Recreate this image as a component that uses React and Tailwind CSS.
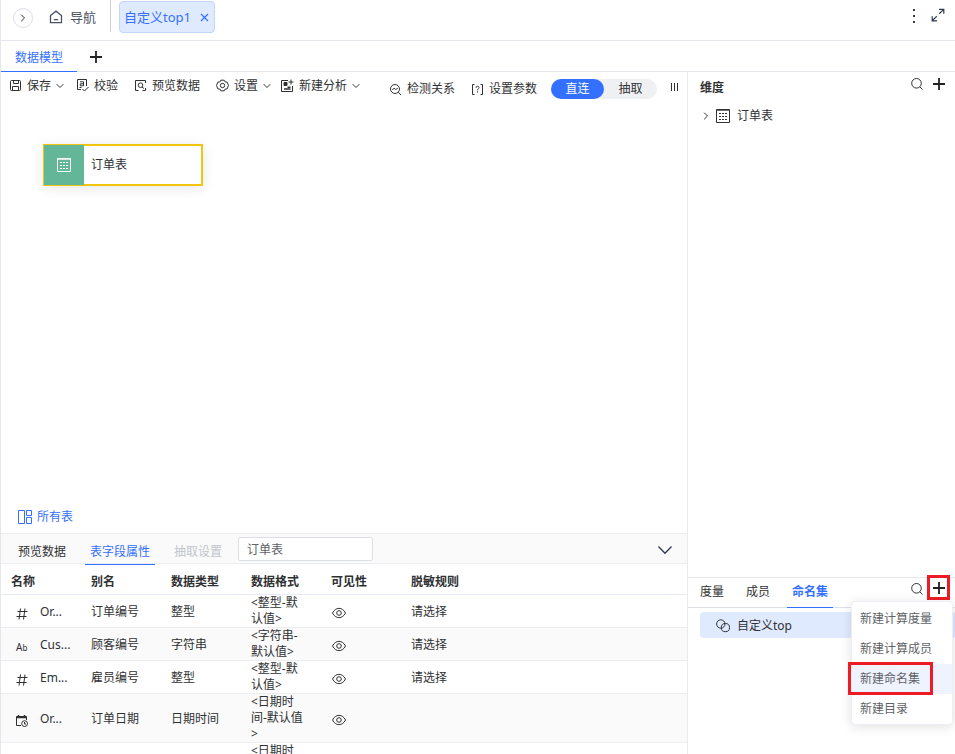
import { useState } from 'react'
import clsx from 'clsx'

const FIELDS = [
  { id: 1, icon: 'number', name: 'Or...', alias: '订单编号', type: '整型', format: '<整型-默认值>', visible: true, rule: '请选择' },
  { id: 2, icon: 'text', name: 'Cus...', alias: '顾客编号', type: '字符串', format: '<字符串-默认值>', visible: true, rule: '请选择' },
  { id: 3, icon: 'number', name: 'Em...', alias: '雇员编号', type: '整型', format: '<整型-默认值>', visible: true, rule: '请选择' },
  { id: 4, icon: 'date', name: 'Or...', alias: '订单日期', type: '日期时间', format: '<日期时间-默认值>', visible: true },
  { id: 5, format: '<日期时间-默认值>' },
]

const COLUMNS = ['名称', '别名', '数据类型', '数据格式', '可见性', '脱敏规则']

const MENU_ITEMS = ['新建计算度量', '新建计算成员', '新建命名集', '新建目录']

export default function App() {
  return (
    <div className="flex h-screen flex-col overflow-hidden border-l border-[#e4e7ed] bg-white font-['Noto_Sans','Noto_Sans_CJK_SC',sans-serif] text-xs leading-4 text-[#303133]">
      <TopBar />
      <ModelTabs />
      <div className="flex min-h-0 flex-1">
        <main className="flex min-w-0 flex-1 flex-col">
          <Toolbar />
          <Canvas />
          <FieldPanel />
        </main>
        <SidePanel />
      </div>
    </div>
  )
}

function TopBar() {
  return (
    <header className="flex h-[41px] shrink-0 items-start border-b border-[#e4e7ed]">
      <button aria-label="展开" className="mt-2 ml-3 flex size-5 items-center justify-center rounded-full border border-[#dcdfe6]">
        <Chevron className="size-2 -rotate-90" />
      </button>
      <a href="#nav" className="ml-4 flex h-[34px] items-center gap-[7px] text-[13px] text-[#4a5264]">
        <HomeIcon />
        导航
      </a>
      <span className="ml-[14px] h-8 w-px bg-[#ccd1dc]" />
      <div className="mt-px ml-2 flex h-8 items-center gap-[9px] rounded border border-[#c3d5fd] bg-[#e0eaff] px-1 text-[13px] text-[#3370ff]">
        <a href="#top1">自定义top1</a>
        <button aria-label="关闭" className="mr-px">
          <svg className="size-[9px]" viewBox="0 0 9 9" stroke="currentColor" strokeWidth="1.2">
            <path d="M1 1l7 7M8 1l-7 7" />
          </svg>
        </button>
      </div>
      <div className="mt-2 mr-2.5 ml-auto flex items-center gap-3 text-[#303b50]">
        <button aria-label="更多">
          <svg className="h-[15px] w-[10px]" viewBox="0 0 10 15" fill="currentColor">
            <path d="M4 0h2v2H4zM4 6h2v2H4zM4 12h2v2H4z" />
          </svg>
        </button>
        <button aria-label="全屏" className="pb-0.5">
          <svg className="size-[14px]" viewBox="0 0 14 14" fill="none" stroke="currentColor" strokeWidth="1.2">
            <path d="M8 1.4h4.8v4.4M12.5 1.6L8.2 5.8M1.2 8.2v4.6H6M1.5 12.5l4.3-4.3" />
          </svg>
        </button>
      </div>
    </header>
  )
}

function ModelTabs() {
  return (
    <nav className="flex h-[31px] shrink-0 items-center border-b border-[#e4e7ed]">
      <button className="-mb-px flex h-[31px] items-center border-b border-[#3370ff] px-[14px] pt-[3px] text-[#3370ff]">数据模型</button>
      <button aria-label="新增" className="ml-[13px] pt-px">
        <PlusIcon />
      </button>
    </nav>
  )
}

function Toolbar() {
  const [mode, setMode] = useState('直连')

  return (
    <div className="flex h-8 shrink-0 items-start whitespace-nowrap">
      <div className="flex h-[27px] items-center pl-2">
        <ToolButton icon={<SaveIcon />} label="保存" menu />
        <ToolButton icon={<CheckIcon />} label="校验" className="ml-3" />
        <ToolButton icon={<PreviewIcon />} label="预览数据" className="ml-4" />
        <ToolButton icon={<SettingIcon />} label="设置" menu className="ml-4" />
        <ToolButton icon={<AnalysisIcon />} label="新建分析" menu className="ml-[10px]" />
      </div>
      <div className="flex h-[34px] items-center pl-[29px]">
        <ToolButton icon={<RelationIcon />} label="检测关系" />
        <ToolButton icon={<ParamIcon />} label="设置参数" className="ml-4" />
        <div className="ml-[14px] flex h-5 rounded-full bg-[#eff0f2]">
          {['直连', '抽取'].map((item) => (
            <button
              key={item}
              onClick={() => setMode(item)}
              className={clsx('h-5 w-[53px] rounded-full', mode === item && 'bg-[#3370ff] text-white')}
            >
              {item}
            </button>
          ))}
        </div>
      </div>
      <button aria-label="列" className="mt-[11px] mr-2 ml-auto">
        <svg className="h-[9px] w-[9px]" viewBox="0 0 9 9" stroke="currentColor">
          <path d="M1.5 0v8M4.5 0v8M7.5 0v8" />
        </svg>
      </button>
    </div>
  )
}

function ToolButton({ icon, label, menu, className }) {
  return (
    <button className={clsx('flex items-center gap-[5px]', className)}>
      {icon}
      {label}
      {menu && <Chevron className="size-2" />}
    </button>
  )
}

function Canvas() {
  return (
    <section className="relative flex min-h-0 flex-1 flex-col">
      <div className="absolute top-10 left-[42px] flex h-[42px] w-40 items-stretch border-2 border-[#f2c511] bg-white shadow-[0_2px_12px_rgba(0,0,0,0.1)]">
        <span className="-my-px -ml-px flex w-10 items-center justify-center bg-[#63b798] text-white">
          <TableIcon className="size-[14px]" />
        </span>
        <span className="flex items-center pl-[7px]">订单表</span>
      </div>
      <button className="mt-auto mb-2 ml-4 flex items-center gap-[5px] self-start text-[#3370ff]">
        <svg className="size-[15px]" viewBox="0 0 15 15" fill="none" stroke="currentColor">
          <path d="M1.5.5h6v13h-6zM9.5.5h5v5h-5zM9.5 7.5h5v6h-5z" />
        </svg>
        所有表
      </button>
    </section>
  )
}

function FieldPanel() {
  const [table, setTable] = useState('订单表')

  return (
    <section className="h-[221px] shrink-0 overflow-hidden border-t border-[#ebedf1]">
      <div className="flex h-[30px] items-center gap-[14px] border-b border-[#ebedf1] bg-[#fafafa] pl-3">
        <button className="h-[31px] px-[5px] pt-[6px]">预览数据</button>
        <button className="-mb-px h-[31px] border-b border-[#3370ff] px-[5px] pt-[6px] text-[#3370ff]">表字段属性</button>
        <button disabled className="h-[31px] px-[5px] pt-[6px] text-[#c0c4cc]">抽取设置</button>
        <input
          aria-label="表名"
          value={table}
          onChange={(e) => setTable(e.target.value)}
          className="-ml-[3px] h-6 w-[135px] rounded-xs border border-[#dcdfe6] bg-white px-2 text-[#606266] outline-none"
        />
        <button aria-label="收起" className="mt-0.5 mr-[14px] ml-auto">
          <svg className="h-[10px] w-4" viewBox="0 0 16 10" fill="none" stroke="#2f3b52" strokeWidth="1.3">
            <path d="M1.5 1.5L8 8.3l6.5-6.8" />
          </svg>
        </button>
      </div>
      <table className="w-full table-fixed border-separate border-spacing-0 text-left">
        <thead>
          <tr>
            {COLUMNS.map((column) => (
              <th key={column} className="h-[31px] w-20 border-b border-[#e6eaf5] pt-[6px] pl-[10px] font-bold last:w-auto">{column}</th>
            ))}
          </tr>
        </thead>
        <tbody>
          {FIELDS.map((field) => (
            <tr key={field.id} className="even:bg-[#fafafa] *:border-b *:border-[#ebedf1]">
              <td className="pt-0.5 pl-[15px]">
                <span className="flex items-center gap-3">
                  <FieldIcon type={field.icon} />
                  {field.name}
                </span>
              </td>
              <td className="pt-0.5 pl-[10px]">{field.alias}</td>
              <td className="pt-0.5 pl-[10px]">{field.type}</td>
              <td className="pr-[14px] pl-[10px] break-words">{field.format}</td>
              <td className="pt-1 pl-[10px]">
                {field.visible && (
                  <button aria-label="可见性" className="block">
                    <EyeIcon />
                  </button>
                )}
              </td>
              <td className="pt-0.5 pl-[10px]">{field.rule}</td>
            </tr>
          ))}
        </tbody>
      </table>
    </section>
  )
}

function SidePanel() {
  return (
    <aside className="flex w-[268px] shrink-0 flex-col border-l border-[#e9ebef]">
      <section className="min-h-0 flex-1">
        <div className="flex h-[30px] items-center pl-3">
          <h2 className="pt-0.5 font-bold">维度</h2>
          <button aria-label="搜索" className="mr-[10px] mb-[6px] ml-auto">
            <SearchIcon />
          </button>
          <button aria-label="新增" className="mr-[10px] mb-[6px]">
            <PlusIcon />
          </button>
        </div>
        <button className="flex h-7 items-center pl-[14px]">
          <Chevron className="mr-1 size-2 -rotate-90" />
          <TableIcon className="mr-[7px] ml-0.5 size-[14px]" />
          订单表
        </button>
      </section>
      <section className="h-[177px] shrink-0 border-t border-[#e4e7ed]">
        <div className="flex h-[30px] items-center border-b border-[#dfe1e6] pl-[7px]">
          <button className="px-[5px] pb-0.5">度量</button>
          <button className="ml-3 px-[5px] pb-0.5">成员</button>
          <button className="-mb-px ml-3 h-[30px] border-b border-[#3370ff] px-[5px] pb-0.5 font-bold text-[#3370ff]">命名集</button>
          <button aria-label="搜索" className="mr-1 mb-[7px] ml-auto">
            <SearchIcon />
          </button>
          <div className="relative mr-[5px] mb-[11px]">
            <button aria-label="新增" className="flex h-[25px] w-[23px] items-center justify-center border-[3px] border-[#ed1c24] pt-px">
              <PlusIcon />
            </button>
            <CreateMenu />
          </div>
        </div>
        <button className="mt-1 ml-3 flex h-[26px] w-64 items-center gap-[7px] rounded bg-[#e0eaff] pt-px pl-4">
          <SetIcon />
          自定义top
        </button>
      </section>
    </aside>
  )
}

function CreateMenu() {
  return (
    <ul className="absolute top-[26px] -right-[3px] z-10 w-[102px] rounded border border-[#ebeef5] bg-white pt-[2px] text-[#606266] shadow-[0_2px_12px_rgba(0,0,0,0.12)]">
      {MENU_ITEMS.map((item) => (
        <li key={item} className={clsx('relative h-[30px]', item === '新建命名集' && 'bg-[#eef3ff]')}>
          <button className="h-full w-full pl-2 text-left">{item}</button>
          {item === '新建命名集' && (
            <span className="pointer-events-none absolute -top-[2px] -left-1 h-[33px] w-[85px] border-[3px] border-[#ed1c24]" />
          )}
        </li>
      ))}
    </ul>
  )
}

function Chevron({ className }) {
  return (
    <svg className={className} viewBox="0 0 8 8" fill="none" stroke="currentColor">
      <path d="M.7 2.2L4 5.5l3.3-3.3" />
    </svg>
  )
}

function PlusIcon() {
  return (
    <svg className="size-3" viewBox="0 0 12 12" stroke="#222" strokeWidth="1.8">
      <path d="M6 0v12M0 6h12" />
    </svg>
  )
}

function SearchIcon() {
  return (
    <svg className="size-3" viewBox="0 0 12 12" fill="none" stroke="currentColor">
      <circle cx="5.5" cy="5.3" r="4.8" />
      <path d="M8.9 8.9l2.6 2.6" />
    </svg>
  )
}

function HomeIcon() {
  return (
    <svg className="size-[14px]" viewBox="0 0 14 14" fill="none" stroke="currentColor" strokeWidth="1.3">
      <path d="M1.5 5.6L7 1.2l5.5 4.4v7h-11zM4.8 9.7h4.4" />
    </svg>
  )
}

function SaveIcon() {
  return (
    <svg className="size-[13px]" viewBox="0 0 13 13" fill="none" stroke="currentColor">
      <rect x="1.5" y="1.5" width="10" height="10" rx="1" />
      <path d="M4.5 1.5v3h5v-3M3.5 11.5v-4h6v4" />
    </svg>
  )
}

function CheckIcon() {
  return (
    <svg className="size-[13px]" viewBox="0 0 13 13" fill="none" stroke="currentColor">
      <path d="M10.5 7V.5h-9v10H5M4 2.800h3.500v4H4.300v-2h3.200M3.500 8.500h2M6.500 10l2 2 4-4" />
    </svg>
  )
}

function PreviewIcon() {
  return (
    <svg className="size-[13px]" viewBox="0 0 13 13" fill="none" stroke="currentColor">
      <path d="M11.5 4V1.5h-10v10h3M8.500 11.500h3V9M8 8l2 1.500" />
      <circle cx="6.5" cy="6.2" r="2.3" />
    </svg>
  )
}

function SettingIcon() {
  return (
    <svg className="size-[13px]" viewBox="0 0 13 13" fill="none" stroke="currentColor">
      <path d="M4.800 1.200h3.400l.9 1.700 2 .2 1.400 3.400-1.400 3.400-2 .2-.9 1.700H4.800l-.9-1.700-2-.2L.5 6.500l1.400-3.400 2-.2z" strokeLinejoin="round" />
      <circle cx="6.5" cy="6.5" r="2.2" />
    </svg>
  )
}

function AnalysisIcon() {
  return (
    <svg className="size-[13px]" viewBox="0 0 13 13" fill="none" stroke="currentColor">
      <path d="M7 1.500H.5v11h11V7M10 .5v5M7.500 3h5" />
      <path d="M3 3.500h3v3H3z" fill="currentColor" />
      <path d="M3 10h6.500M6.500 8.200h3" strokeWidth="1.500" />
    </svg>
  )
}

function RelationIcon() {
  return (
    <svg className="size-[13px]" viewBox="0 0 13 13" fill="none" stroke="currentColor">
      <circle cx="6" cy="6" r="4.5" />
      <path d="M9.2 9.2l2.800 2.800M3.2 6.8L5 5.3l1.8 1.2 2-1.3" />
    </svg>
  )
}

function ParamIcon() {
  return (
    <svg className="size-[13px]" viewBox="0 0 13 13" fill="none" stroke="currentColor">
      <path d="M3.5 1.5h-2v10h2M9.5 1.5h2v10h-2M5 4.8c0-2 3-2 3-.2 0 1.2-1.5 1.1-1.5 2.7M6.5 8.3v1.2" />
    </svg>
  )
}

function TableIcon({ className }) {
  return (
    <svg className={className} viewBox="0 0 14 14" fill="none" stroke="currentColor">
      <path d="M.5.5h13v13H.5zM.5 1.2h13" />
      <path d="M3 4.5h2M6 4.5h2M9 4.5h2M3 7.5h2M6 7.5h2M9 7.5h2M3 10.5h2M6 10.5h2M9 10.5h2" />
    </svg>
  )
}

function SetIcon() {
  return (
    <svg className="size-[14px]" viewBox="0 0 14 14" fill="none" stroke="currentColor">
      <circle cx="4.8" cy="5" r="4.2" />
      <circle cx="9.4" cy="8.6" r="4.1" />
    </svg>
  )
}

function EyeIcon() {
  return (
    <svg className="h-3 w-4" viewBox="0 0 16 12" fill="none" stroke="currentColor">
      <path d="M1.5 6C4.5-.2 11.5-.2 14.5 6c-3 6.2-10 6.2-13 0z" />
      <circle cx="8" cy="6" r="2.3" />
    </svg>
  )
}

function FieldIcon({ type }) {
  if (type === 'number') {
    return (
      <svg className="mt-1 size-3" viewBox="0 0 12 12" fill="none" stroke="currentColor">
        <path d="M4.5.5L3 11.5M9 .5L7.5 11.500M1.500 3.500h10M.5 8.500h10" />
      </svg>
    )
  }
  if (type === 'text') {
    return <span className="mt-1 w-3 text-[10px] leading-3">A<small className="text-[8px]">b</small></span>
  }
  if (type === 'date') {
    return (
      <svg className="mt-1 size-3" viewBox="0 0 12 12" fill="none" stroke="currentColor">
        <path d="M5 10.5H.5v-9h10V5" />
        <path d="M.5 2.500h10M2.500 0v2M8.500 0v2" strokeWidth="1.500" />
        <circle cx="8.600" cy="8.600" r="2.900" />
        <path d="M8.500 7v2h1.500" />
      </svg>
    )
  }
  return null
}
